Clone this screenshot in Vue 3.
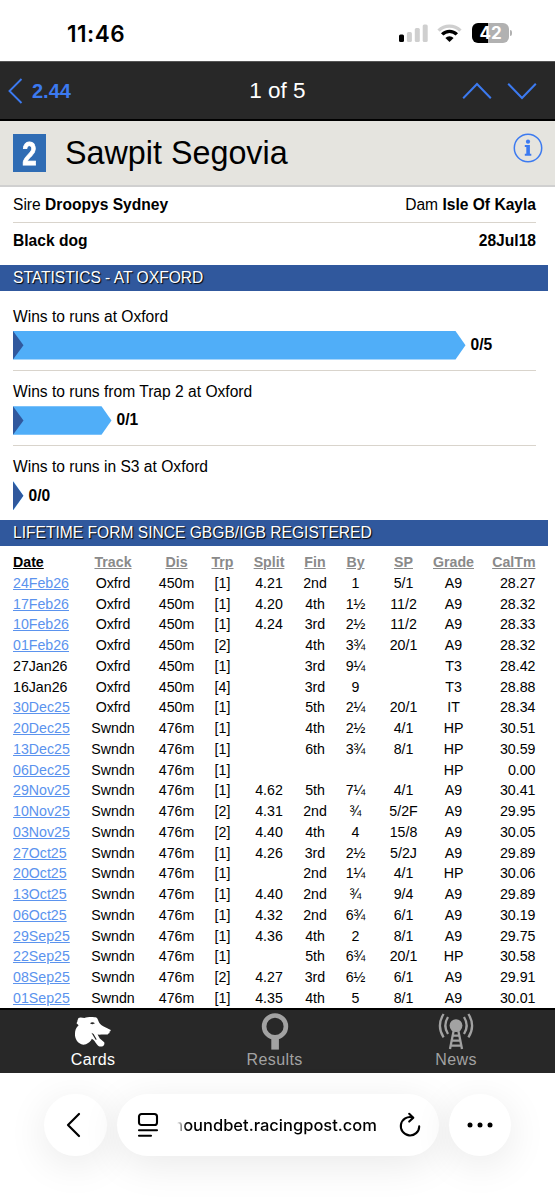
<template>
  <div class="phone">
    <!-- iOS status bar -->
    <div class="status-bar">
      <span class="clock">11:46</span>
      <div class="status-icons">
        <svg class="signal" width="29" height="18" viewBox="0 0 29 18">
          <rect x="0" y="10.5" width="5" height="7.5" rx="1.5" fill="#000" />
          <rect x="7.9" y="8" width="5" height="10" rx="1.5" fill="#cfcfcf" />
          <rect x="15.8" y="4" width="5" height="14" rx="1.5" fill="#cfcfcf" />
          <rect x="23.7" y="0.5" width="5" height="17.5" rx="1.5" fill="#cfcfcf" />
        </svg>
        <svg class="wifi" width="25" height="19" viewBox="0 0 25 19">
          <path d="M1.6 6.6 A15.4 15.4 0 0 1 23.4 6.6" fill="none" stroke="#cfcfcf" stroke-width="3.4" />
          <path d="M5.2 10.4 A10.3 10.3 0 0 1 19.8 10.4" fill="none" stroke="#000" stroke-width="3.4" />
          <path d="M8.4 14 A5.6 5.6 0 0 1 16.6 14 L12.5 18 Z" fill="#000" />
        </svg>
        <div class="battery"><span>42</span></div>
        <div class="battery-tip"></div>
      </div>
    </div>

    <div class="nav-bar">
      <a class="back">
        <svg width="15" height="26" viewBox="0 0 15 26">
          <path d="M13.5 1 L1.5 13 L13.5 25" fill="none" stroke="currentColor" stroke-width="1.9" />
        </svg>
        <span>2.44</span>
      </a>
      <span class="counter">1 of 5</span>
      <div class="arrows">
        <svg width="30" height="18" viewBox="0 0 30 18">
          <path d="M1.2 16.2 L15 2 L28.8 16.2" fill="none" stroke="currentColor" stroke-width="2" />
        </svg>
        <svg width="30" height="18" viewBox="0 0 30 18">
          <path d="M1.2 1.8 L15 16 L28.8 1.8" fill="none" stroke="currentColor" stroke-width="2" />
        </svg>
      </div>
    </div>

    <div class="dog-header">
      <div class="trap"><span>2</span></div>
      <h1>Sawpit Segovia</h1>
      <svg class="info" width="30" height="30" viewBox="0 0 30 30">
        <circle cx="15" cy="15" r="13.7" fill="none" stroke="currentColor" stroke-width="1.5" />
        <circle cx="15" cy="8.7" r="2.1" fill="currentColor" />
        <path d="M11.8 12 H16.9 V20.8 H18.3 V22.8 H11.8 V20.8 H13.3 V14 H11.8 Z" fill="currentColor" />
      </svg>
    </div>

    <div class="details">
      <div class="detail-row lined">
        <span>Sire <b>Droopys Sydney</b></span>
        <span>Dam <b>Isle Of Kayla</b></span>
      </div>
      <div class="detail-row">
        <b>Black dog</b>
        <b>28Jul18</b>
      </div>
    </div>

    <h2 class="section-title">STATISTICS - AT OXFORD</h2>
    <div class="stats">
      <div v-for="s in stats" :key="s.label" class="stat">
        <p>{{ s.label }}</p>
        <div class="bar-line">
          <div class="bar" :style="{ width: s.width + 'px' }"><i></i></div>
          <b>{{ s.value }}</b>
        </div>
      </div>
    </div>

    <h2 class="section-title">LIFETIME FORM SINCE GBGB/IGB REGISTERED</h2>
    <table class="form-table">
      <thead>
        <tr>
          <th v-for="c in columns" :key="c">{{ c }}</th>
        </tr>
      </thead>
      <tbody>
        <tr v-for="run in runs" :key="run[0]">
          <td v-for="(cell, i) in run" :key="i">
            <a v-if="i === 0 && !trials.includes(cell)">{{ cell }}</a>
            <template v-else>{{ cell }}</template>
          </td>
        </tr>
      </tbody>
    </table>

    <div class="tab-bar">
      <div class="tab active">
        <svg width="38" height="38" viewBox="0 -3 38 38">
          <path
            d="M2.5 7.2 Q3.6 5.6 3.6 4 Q4 1.4 6.8 1.6 L10.5 2 C13 .8 19.5 .6 22.3 1.5 C24 2.4 24.2 5.2 25.4 7 C27.6 10 31 11.2 36.8 13.9 Q36.6 15.2 35.4 15.8 L35.6 16.9 Q34.4 17.2 33.6 18.4 C31 18.9 28.4 18.3 25.6 18.8 L23.6 18.4 L25.8 22.4 L30.2 26.3 C31 28.5 29.6 30.6 27.2 30.6 C25 30.8 24 29.6 22.8 28.2 C21.2 26.4 20 23.6 17.8 22.8 C16.6 26 13 28.6 9.4 28.7 C3.6 28.2 .6 22.6 1 17.6 C1 14.4 1.8 12 4.6 9.2 Z"
            fill="currentColor"
          />
          <path d="M16 7.2 Q18.4 5.2 21 7.3 Q18.6 9 16 7.2 Z M17.4 16.8 L21.6 23.8 L22.8 23.4 L19.6 18 Z" fill="#282828" />
        </svg>
        <span>Cards</span>
      </div>
      <div class="tab">
        <svg width="38" height="38" viewBox="0 0 38 38">
          <circle cx="19" cy="13.4" r="10.9" fill="none" stroke="currentColor" stroke-width="4.6" />
          <rect x="15.3" y="25" width="7.6" height="11.6" fill="currentColor" />
        </svg>
        <span>Results</span>
      </div>
      <div class="tab">
        <svg width="38" height="38" viewBox="0 0 38 38">
          <circle cx="19" cy="12.6" r="6.4" fill="currentColor" />
          <g fill="none" stroke="currentColor" stroke-width="2.3">
            <path d="M11 4 Q5.6 12.6 11 21 M27 4 Q32.4 12.6 27 21" />
            <path d="M6.6 1 Q-.8 12.6 6.6 24.4 M31.4 1 Q38.8 12.6 31.4 24.4" />
            <path d="M16.6 18 L13 36 M21.4 18 L25 36 M16 22.6 H22 M15 27.6 H23 M14 32.6 H24" />
          </g>
        </svg>
        <span>News</span>
      </div>
    </div>

    <!-- Safari bottom controls -->
    <div class="browser-bar">
      <div class="round-btn back-btn">
        <svg width="16" height="26" viewBox="0 0 16 26">
          <path d="M14 2 L3 13 L14 24" fill="none" stroke="#000" stroke-width="2.2" stroke-linecap="round" stroke-linejoin="round" />
        </svg>
      </div>
      <div class="url-pill">
        <svg class="page-icon" width="22" height="26" viewBox="0 0 22 26">
          <g fill="none" stroke="#000" stroke-width="2.1" stroke-linecap="round">
            <rect x="2" y="2" width="18" height="11" rx="2.6" />
            <path d="M2 18.2 H20 M2 23.8 H14" />
          </g>
        </svg>
        <div class="url"><span>houndbet.racingpost.com</span></div>
        <svg class="reload" width="22" height="26" viewBox="0 0 22 26">
          <g fill="none" stroke="#000" stroke-width="2.1" stroke-linecap="round" stroke-linejoin="round">
            <path d="M13.5 5.4 A9.2 9.2 0 1 0 20.2 14.4" />
            <path d="M10.2 1.8 L14.3 5.7 L10.2 9.6" />
          </g>
        </svg>
      </div>
      <div class="round-btn">
        <svg width="26" height="6" viewBox="0 0 26 6">
          <circle cx="3" cy="3" r="2.5" />
          <circle cx="13" cy="3" r="2.5" />
          <circle cx="23" cy="3" r="2.5" />
        </svg>
      </div>
    </div>
  </div>
</template>

<script setup>
const stats = [
  { label: 'Wins to runs at Oxford', value: '0/5', width: 452.5 },
  { label: 'Wins to runs from Trap 2 at Oxford', value: '0/1', width: 98.5 },
  { label: 'Wins to runs in S3 at Oxford', value: '0/0', width: 10.5 },
]

const columns = ['Date', 'Track', 'Dis', 'Trp', 'Split', 'Fin', 'By', 'SP', 'Grade', 'CalTm']

// trial runs have no race result to link to
const trials = ['27Jan26', '16Jan26']

const runs = [
  ['24Feb26', 'Oxfrd', '450m', '[1]', '4.21', '2nd', '1', '5/1', 'A9', '28.27'],
  ['17Feb26', 'Oxfrd', '450m', '[1]', '4.20', '4th', '1½', '11/2', 'A9', '28.32'],
  ['10Feb26', 'Oxfrd', '450m', '[1]', '4.24', '3rd', '2½', '11/2', 'A9', '28.33'],
  ['01Feb26', 'Oxfrd', '450m', '[2]', '', '4th', '3¾', '20/1', 'A9', '28.32'],
  ['27Jan26', 'Oxfrd', '450m', '[1]', '', '3rd', '9¼', '', 'T3', '28.42'],
  ['16Jan26', 'Oxfrd', '450m', '[4]', '', '3rd', '9', '', 'T3', '28.88'],
  ['30Dec25', 'Oxfrd', '450m', '[1]', '', '5th', '2¼', '20/1', 'IT', '28.34'],
  ['20Dec25', 'Swndn', '476m', '[1]', '', '4th', '2½', '4/1', 'HP', '30.51'],
  ['13Dec25', 'Swndn', '476m', '[1]', '', '6th', '3¾', '8/1', 'HP', '30.59'],
  ['06Dec25', 'Swndn', '476m', '[1]', '', '', '', '', 'HP', '0.00'],
  ['29Nov25', 'Swndn', '476m', '[1]', '4.62', '5th', '7¼', '4/1', 'A9', '30.41'],
  ['10Nov25', 'Swndn', '476m', '[2]', '4.31', '2nd', '¾', '5/2F', 'A9', '29.95'],
  ['03Nov25', 'Swndn', '476m', '[2]', '4.40', '4th', '4', '15/8', 'A9', '30.05'],
  ['27Oct25', 'Swndn', '476m', '[1]', '4.26', '3rd', '2½', '5/2J', 'A9', '29.89'],
  ['20Oct25', 'Swndn', '476m', '[1]', '', '2nd', '1¼', '4/1', 'HP', '30.06'],
  ['13Oct25', 'Swndn', '476m', '[1]', '4.40', '2nd', '¾', '9/4', 'A9', '29.89'],
  ['06Oct25', 'Swndn', '476m', '[1]', '4.32', '2nd', '6¾', '6/1', 'A9', '30.19'],
  ['29Sep25', 'Swndn', '476m', '[1]', '4.36', '4th', '2', '8/1', 'A9', '29.75'],
  ['22Sep25', 'Swndn', '476m', '[1]', '', '5th', '6¾', '20/1', 'HP', '30.58'],
  ['08Sep25', 'Swndn', '476m', '[2]', '4.27', '3rd', '6½', '6/1', 'A9', '29.91'],
  ['01Sep25', 'Swndn', '476m', '[1]', '4.35', '4th', '5', '8/1', 'A9', '30.01'],
]
</script>

<style>
body {
  margin: 0;
  background: #fff;
}
</style>

<style scoped>
.phone {
  width: 555px;
  height: 1200px;
  overflow: hidden;
  display: flex;
  flex-direction: column;
  background: #fff;
  color: #000;
  font-family: "Liberation Sans", Arial, sans-serif;
  font-size: 15.6px;
}

.phone > * {
  flex-shrink: 0;
  box-sizing: border-box;
}

/* status bar */
.status-bar {
  height: 61px;
  display: flex;
  justify-content: space-between;
  align-items: center;
  padding: 5px 43px 0 67px;
}

.clock {
  font-family: Inter, sans-serif;
  font-weight: 600;
  font-size: 22.5px;
  letter-spacing: 0.5px;
}

.status-icons {
  display: flex;
  align-items: center;
}

.wifi { margin-left: 9px; }

.battery {
  margin-left: 10px;
  width: 37px;
  height: 20px;
  border-radius: 6px;
  background: linear-gradient(to right, #000 43%, #b1b1b1 43%);
  color: #fff;
  font: 700 17px/20px Inter, sans-serif;
  text-align: center;
}

.battery-tip {
  width: 2px;
  height: 6px;
  margin-left: 1px;
  border-radius: 0 2px 2px 0;
  background: #b1b1b1;
}

/* top navigation */
.nav-bar {
  height: 60px;
  display: grid;
  grid-template-columns: 1fr auto 1fr;
  align-items: center;
  padding: 1px 18px 0 8px;
  background: #282828;
  border-top: 1px solid #555;
  border-bottom: 2px solid #000;
}

.back,
.arrows {
  display: flex;
  align-items: center;
  color: #3c7af0;
}

.back {
  gap: 9px;
  font-weight: bold;
  font-size: 20px;
}

.back span { padding-top: 1px; }

.counter {
  color: #fff;
  font-size: 22.5px;
  margin-left: 10px;
}

.arrows {
  gap: 15px;
  justify-content: flex-end;
}

/* dog name */
.dog-header {
  height: 66px;
  display: flex;
  align-items: center;
  padding: 0 12px 0 13px;
  background: #e5e4df;
  border-bottom: 2px solid #d0d0d0;
}

.trap {
  width: 33px;
  height: 38px;
  display: flex;
  align-items: center;
  justify-content: center;
  background: #2f6cb4;
  color: #fff;
  font-size: 34px;
  font-weight: bold;
  -webkit-text-stroke: 0.8px #fff;
}

.trap span { transform: scaleX(0.76); }

h1 {
  flex: 1;
  margin: 1px 0 0 19px;
  font-weight: normal;
  font-size: 32.3px;
}

.info {
  color: #3c7af0;
  margin-bottom: 10px;
}

/* breeding */
.details {
  height: 78px;
  padding: 0 19px 0 13px;
}

.detail-row {
  height: 36px;
  display: flex;
  justify-content: space-between;
  align-items: center;
}

.detail-row.lined,
.stat:not(:last-child) {
  border-bottom: 1.5px solid #d9d4cc;
  box-sizing: border-box;
}

.section-title {
  width: 548px;
  height: 26px;
  margin: 0;
  padding-left: 13px;
  background: #30589d;
  color: #fff;
  font-weight: normal;
  font-size: 15.6px;
  line-height: 26px;
  text-shadow: 1px 1px 1px #000;
}

/* statistics */
.stats {
  height: 229px;
  padding: 5px 19px 0 13px;
}

.stat {
  height: 75.2px;
  padding-top: 12px;
}

.stat p {
  margin: 0;
  line-height: 18px;
}

.bar-line {
  display: flex;
  align-items: center;
  gap: 5px;
  margin-top: 5px;
}

.bar {
  height: 28.5px;
  background: #50aef8;
  clip-path: polygon(0 0, calc(100% - 10px) 0, 100% 50%, calc(100% - 10px) 100%, 0 100%);
}

.bar i {
  display: block;
  width: 10.5px;
  height: 100%;
  background: #30589d;
  clip-path: polygon(0 0, 100% 50%, 0 100%);
}

/* form table */
.form-table {
  display: block;
  height: 462px;
  overflow: hidden;
  padding: 6px 0 0 13px;
  font-size: 14.2px;
}

.form-table thead,
.form-table tbody {
  display: block;
}

.form-table tr {
  display: grid;
  grid-template-columns: 68px 64px 63px 29px 64px 28px 53px 43px 57px 53.5px;
  height: 20.75px;
  line-height: 20.75px;
}

.form-table th,
.form-table td {
  padding: 0;
  text-align: center;
  white-space: nowrap;
}

.form-table th {
  color: #8a8a8a;
  text-decoration: underline;
}

.form-table th:first-child { color: #000; }

.form-table tr > :first-child { text-align: left; }
.form-table tr > :last-child { text-align: right; }

.form-table a {
  color: #5b93ee;
  text-decoration: underline;
}

/* app tabs */
.tab-bar {
  height: 65px;
  display: grid;
  grid-template-columns: repeat(3, 181.4px);
  padding-left: 2.5px;
  background: #282828;
  border-top: 2px solid #000;
}

.tab {
  display: flex;
  flex-direction: column;
  align-items: center;
  color: #a2a2a2;
  font-size: 16px;
  letter-spacing: 0.4px;
}

.tab.active { color: #fff; }

.tab svg {
  margin: 3px 0 -1px;
}

.tab span { line-height: 20px; }

/* browser controls */
.browser-bar {
  height: 127px;
  display: flex;
  align-items: flex-start;
  gap: 10px;
  padding: 20.5px 0 0 44px;
}

.round-btn,
.url-pill {
  height: 62.5px;
  display: flex;
  align-items: center;
  background: #fff;
  border-radius: 32px;
  box-shadow: 0 8px 40px rgba(0, 0, 0, 0.09);
}

.round-btn {
  width: 62.5px;
  justify-content: center;
}

.back-btn svg { margin-right: 4px; }

.url-pill {
  width: 322px;
  box-sizing: border-box;
  padding: 0 18px 0 20px;
}

/* hostname is cut off and faded on its left side */
.url {
  width: 200.5px;
  margin-left: 18px;
  display: flex;
  justify-content: flex-end;
  overflow: hidden;
  font: 500 16.5px/24px Inter, sans-serif;
  -webkit-mask-image: linear-gradient(to right, transparent, #000 10px);
  mask-image: linear-gradient(to right, transparent, #000 10px);
}

.reload { margin-left: 21.5px; }
</style>
